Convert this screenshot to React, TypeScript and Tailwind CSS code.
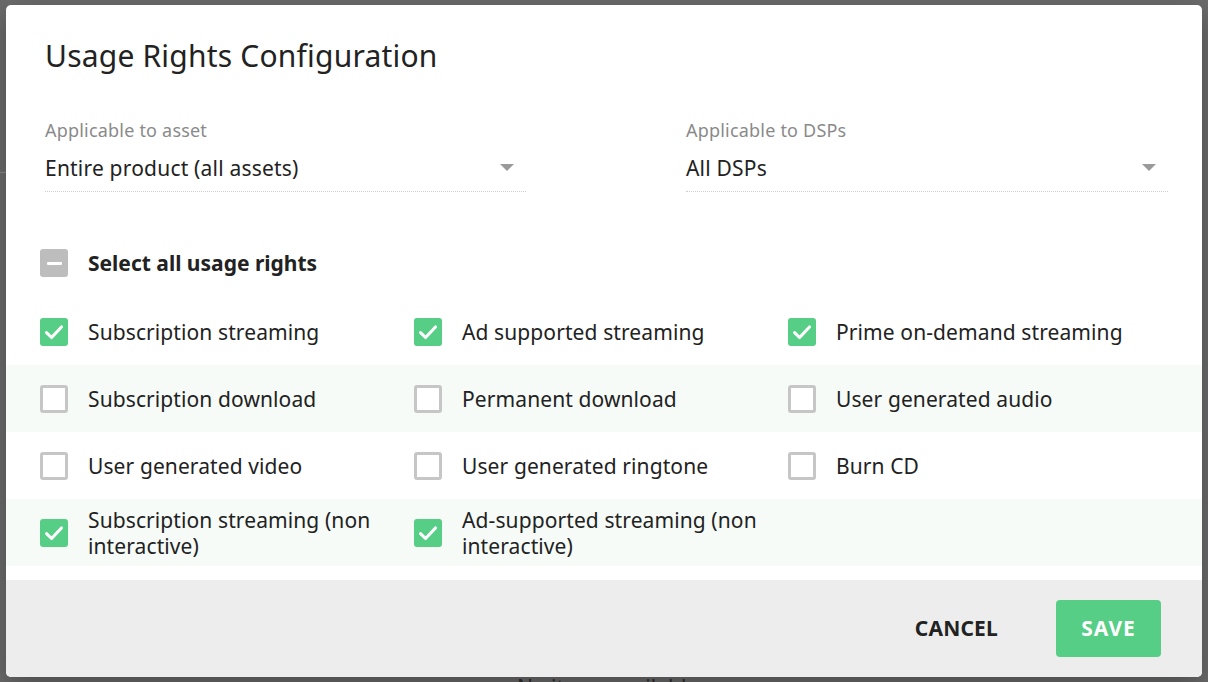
import React from "react";

type Right = { label: string; checked: boolean };

const rows: Right[][] = [
  [
    { label: "Subscription streaming", checked: true },
    { label: "Ad supported streaming", checked: true },
    { label: "Prime on-demand streaming", checked: true },
  ],
  [
    { label: "Subscription download", checked: false },
    { label: "Permanent download", checked: false },
    { label: "User generated audio", checked: false },
  ],
  [
    { label: "User generated video", checked: false },
    { label: "User generated ringtone", checked: false },
    { label: "Burn CD", checked: false },
  ],
  [
    { label: "Subscription streaming (non interactive)", checked: true },
    { label: "Ad-supported streaming (non interactive)", checked: true },
  ],
];

const font = { fontFamily: "'Noto Sans', Lato, sans-serif" };

function Box({ checked }: { checked: boolean }) {
  if (checked) {
    return (
      <span className="flex h-[28px] w-[28px] shrink-0 items-center justify-center rounded-[3px] bg-[#56ce86]">
        <svg width="22" height="22" viewBox="0 0 20 20" fill="none">
          <path d="M3.2 10.6 L7.8 15 L16.8 5.4" stroke="white" strokeWidth="2.8" strokeLinecap="round" strokeLinejoin="round" />
        </svg>
      </span>
    );
  }
  return <span className="block h-[28px] w-[28px] shrink-0 rounded-[3px] border-[3px] border-[#c6c6c6] bg-white" />;
}

function Select({ label, value }: { label: string; value: string }) {
  return (
    <div className="flex flex-col">
      <span className="text-[18px] leading-[20px] tracking-[0.2px] text-[#8a8a8a]">{label}</span>
      <div className="mt-[15px] flex items-center justify-between border-b border-dotted border-[#cfcfcf] pb-[10px]">
        <span className="text-[21px] leading-[26px] tracking-[0.2px] text-[#222]">{value}</span>
        <svg width="14" height="8" viewBox="0 0 14 8" className="mr-[12px]">
          <path d="M0 0 L14 0 L7 7 Z" fill="#9a9a9a" />
        </svg>
      </div>
    </div>
  );
}

export default function App() {
  return (
    <div className="relative h-[682px] w-[1208px] overflow-hidden bg-[#6b6b6b]" style={font}>
      {/* page behind the overlay */}
      <div className="absolute left-0 top-[172px] h-px w-[6px] bg-[#8a8a8a]" />
      <div className="absolute left-[517px] top-[674px] text-[21px] leading-[26px] text-[#2e2e2e]">No items available</div>

      <div className="relative pl-[6px] pt-[5px]">
        <div className="flex h-[672px] w-[1196px] flex-col overflow-hidden rounded-[5px] bg-white shadow-[0_10px_30px_rgba(0,0,0,0.3)]">
          <h1 className="px-[39px] pt-[33px] text-[30px] leading-[36px] tracking-[0.2px] text-[#222]">Usage Rights Configuration</h1>

          <div className="mt-[46px] grid grid-cols-[481px_482px] gap-x-[160px] px-[39px]">
            <Select label="Applicable to asset" value="Entire product (all assets)" />
            <Select label="Applicable to DSPs" value="All DSPs" />
          </div>

          <div className="mt-[57px] flex items-center gap-[20px] px-[34px]">
            <span className="flex h-[28px] w-[28px] items-center justify-center rounded-[3px] bg-[#bdbdbd]">
              <span className="block h-[3px] w-[15px] rounded-[1px] bg-white" />
            </span>
            <span className="text-[21px] font-bold leading-[28px] text-[#222]">Select all usage rights</span>
          </div>

          <div className="mt-[21px] flex flex-col">
            {rows.map((row, i) => (
              <div
                key={i}
                className={`grid h-[67px] grid-cols-[374px_374px_1fr] items-center px-[34px] ${i % 2 === 1 ? "bg-[#f6fbf8]" : "bg-white"}`}
              >
                {row.map((r) => (
                  <div key={r.label} className="flex items-center gap-[20px] pr-[20px]">
                    <Box checked={r.checked} />
                    <span className="text-[21px] leading-[26px] tracking-[0.1px] text-[#222]">{r.label}</span>
                  </div>
                ))}
              </div>
            ))}
          </div>

          <div className="mt-auto flex h-[97px] items-center justify-end gap-[58px] bg-[#ededed] pr-[41px]">
            <button className="text-[21px] font-bold tracking-[0.2px] text-[#222]">CANCEL</button>
            <button className="h-[57px] w-[105px] rounded-[4px] bg-[#56ce86] text-[21px] font-bold tracking-[1px] text-white">SAVE</button>
          </div>
        </div>
      </div>
    </div>
  );
}
